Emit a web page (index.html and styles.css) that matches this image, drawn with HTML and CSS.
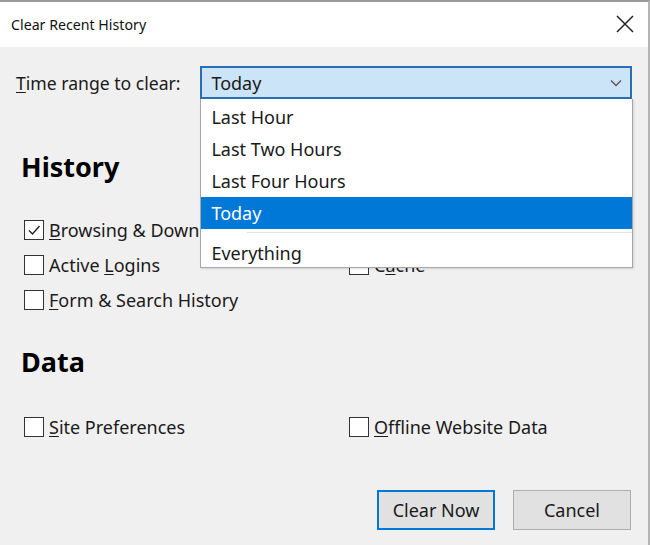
FILE: index.html
```html
<!DOCTYPE html>
<html lang="en">
<head>
<meta charset="utf-8">
<title>Clear Recent History</title>
<link rel="stylesheet" href="styles.css">
</head>
<body>
<div class="window">
  <div class="titlebar">
    <span class="title">Clear Recent History</span>
    <svg class="close" width="18" height="18" viewBox="0 0 18 18"><path d="M1 1 L17 17 M17 1 L1 17" stroke="#222" stroke-width="1.5" fill="none"/></svg>
  </div>
  <div class="content">
    <div class="range-row">
      <span class="range-label"><u>T</u>ime range to clear:</span>
      <div class="select-wrap">
        <div class="select">
          <span>Today</span>
          <svg class="chev" width="12" height="8" viewBox="0 0 12 8"><path d="M1 1.5 L6 6.5 L11 1.5" stroke="#555" stroke-width="1.3" fill="none"/></svg>
        </div>
        <ul class="menu">
          <li>Last Hour</li>
          <li>Last Two Hours</li>
          <li>Last Four Hours</li>
          <li class="selected">Today</li>
          <li class="sep"></li>
          <li>Everything</li>
        </ul>
      </div>
    </div>

    <h2 class="heading history">History</h2>
    <div class="checks">
      <label class="check"><span class="box checked"><svg width="16" height="16" viewBox="0 0 16 16"><path d="M3 8.5 L6.5 12 L13.5 4" stroke="#222" stroke-width="1.4" fill="none"/></svg></span><span><u>B</u>rowsing &amp; Download History</span></label>
      <label class="check"><span class="box"></span><span><u>C</u>ookies</span></label>
      <label class="check"><span class="box"></span><span>Active <u>L</u>ogins</span></label>
      <label class="check"><span class="box"></span><span>C<u>a</u>che</span></label>
      <label class="check"><span class="box"></span><span><u>F</u>orm &amp; Search History</span></label>
    </div>

    <h2 class="heading data">Data</h2>
    <div class="checks">
      <label class="check"><span class="box"></span><span><u>S</u>ite Preferences</span></label>
      <label class="check"><span class="box"></span><span><u>O</u>ffline Website Data</span></label>
    </div>

    <div class="buttons">
      <button class="btn primary">Clear Now</button>
      <button class="btn">Cancel</button>
    </div>
  </div>
</div>
</body>
</html>
```

FILE: styles.css
```css
* { box-sizing: border-box; }
html, body { margin: 0; padding: 0; }
body {
  width: 650px;
  height: 545px;
  overflow: hidden;
  font-family: "Noto Sans", "Open Sans", sans-serif;
  font-size: 18px;
  color: #1a1a1a;
  background: #f0f0f0;
}
.window {
  width: 650px;
  height: 545px;
  border-top: 2px solid #9a9a9a;
  border-right: 2px solid #b4b4b4;
  display: flex;
  flex-direction: column;
}
.titlebar {
  height: 45px;
  background: #ffffff;
  display: flex;
  align-items: center;
  justify-content: space-between;
  padding: 0 14px 0 11px;
  flex: none;
}
.title { font-size: 14.2px; color: #111; margin-top: -1px; }
.close { margin-top: -1px; }
.content {
  flex: 1;
  background: #f0f0f0;
  padding: 19px 16px 0 16px;
}
.range-row {
  display: flex;
  align-items: center;
}
.range-label {
  width: 185px;
  font-size: 17.6px;
}
.select-wrap {
  position: relative;
  width: 433px;
}
.select {
  height: 33px;
  background: #cce4f7;
  border: 2px solid #2a6fb3;
  display: flex;
  align-items: center;
  justify-content: space-between;
  padding: 0 8px 0 9px;
  font-size: 18px;
}
.chev { margin-top: 1px; }
.menu {
  position: absolute;
  top: 33px;
  left: 0;
  width: 433px;
  margin: 0;
  padding: 2px 0 0 0;
  list-style: none;
  background: #ffffff;
  border: 1px solid #a6a6a6;
  border-top: none;
  box-shadow: 1px 1px 2px rgba(0,0,0,0.12);
  z-index: 10;
  height: 169px;
  overflow: hidden;
}
.menu li {
  height: 32px;
  line-height: 32px;
  padding-left: 10px;
  font-size: 18px;
  color: #1a1a1a;
}
.menu li.selected {
  background: #0078d7;
  color: #ffffff;
}
.menu li.sep {
  margin-left: 46px;
  border-top: 1px solid #e4e4e4;
  margin-top: 3px;
  height: 7px;
}
.menu li:last-child { height: 28px; line-height: 28px; }
.heading {
  margin: 0;
  font-size: 27px;
  font-weight: 700;
  color: #000;
  padding-left: 5px;
  line-height: 34px;
}
.history { margin-top: 51px; }
.data { margin-top: 34px; }
.checks {
  display: grid;
  grid-template-columns: 325px 1fr;
  row-gap: 13px;
  padding-left: 8px;
}
.history + .checks { margin-top: 35px; }
.data + .checks { margin-top: 37px; }
.check {
  display: flex;
  align-items: center;
  height: 22px;
  font-size: 18px;
  white-space: nowrap;
}
.box {
  width: 20px;
  height: 20px;
  border: 1.5px solid #333;
  background: #fff;
  margin-right: 5px;
  display: flex;
  align-items: center;
  justify-content: center;
  flex: none;
}
u { text-decoration-thickness: 1px; text-underline-offset: 2px; }
.buttons {
  display: flex;
  justify-content: flex-end;
  gap: 18px;
  margin-top: 52px;
  padding-right: 1px;
}
.btn {
  width: 118px;
  height: 40px;
  font-family: inherit;
  font-size: 18px;
  color: #1a1a1a;
  background: #e1e1e1;
  border: 1px solid #adadad;
}
.btn.primary {
  border: 2px solid #0078d7;
}
```
